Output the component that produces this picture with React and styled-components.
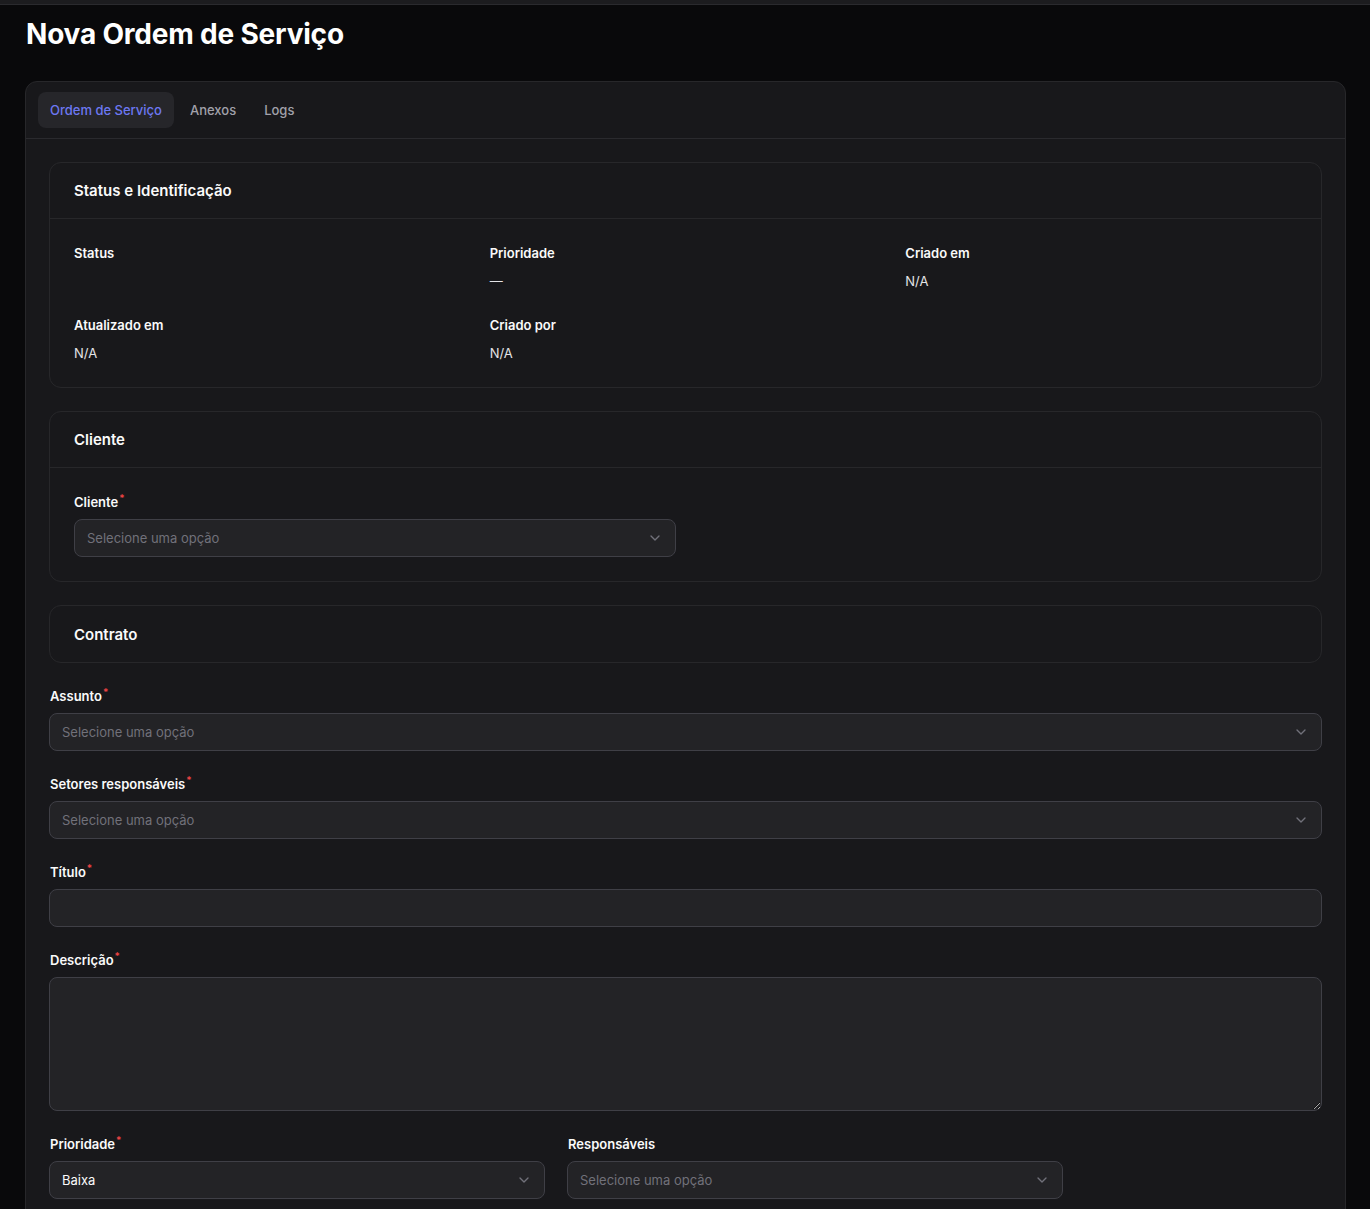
import styled, { createGlobalStyle } from 'styled-components'
import { ChevronDown } from 'lucide-react'

const GlobalStyle = createGlobalStyle`
  * { box-sizing: border-box; }
  body {
    margin: 0;
    background: #09090b;
    font-family: Inter, 'Noto Sans', sans-serif;
    color: #fafafa;
  }
`

const TopStrip = styled.div`
  height: 5px;
  background: #1c1c1f;
  border-bottom: 1px solid #2a2a2e;
`

const Page = styled.div`
  padding: 11px 24px 40px 25px;
`

const Title = styled.h1`
  margin: 0 0 29px 1px;
  font-size: 28px;
  line-height: 36px;
  font-weight: 700;
  letter-spacing: -0.2px;
  color: #fff;
`

const Card = styled.div`
  background: #18181b;
  border: 1px solid #27272a;
  border-radius: 12px;
`

const TabBar = styled.div`
  display: flex;
  gap: 4px;
  padding: 10px 12px;
  border-bottom: 1px solid #2a2a2e;
`

const Tab = styled.div`
  height: 36px;
  display: flex;
  align-items: center;
  padding: 0 12px;
  border-radius: 8px;
  font-size: 13px;
  font-weight: 500;
  color: ${(p) => (p.$active ? '#6d78f2' : '#a1a1aa')};
  background: ${(p) => (p.$active ? '#26262a' : 'transparent')};
`

const Content = styled.div`
  display: flex;
  flex-direction: column;
  gap: 23px;
  padding: 23px 23px 40px;
`

const Section = styled.section`
  border: 1px solid #27272a;
  border-radius: 12px;
`

const SectionHeader = styled.div`
  height: 56px;
  display: flex;
  align-items: center;
  padding: 0 24px;
  font-size: 15px;
  font-weight: 600;
  color: #fafafa;
  border-bottom: ${(p) => (p.$last ? 'none' : '1px solid #27272a')};
`

const SectionBody = styled.div`
  padding: 24px;
`

const InfoGrid = styled.div`
  display: grid;
  grid-template-columns: repeat(3, 1fr);
  column-gap: 24px;
  row-gap: 24px;
`

const InfoItem = styled.div`
  display: flex;
  flex-direction: column;
  gap: 8px;
`

const InfoLabel = styled.div`
  font-size: 13px;
  line-height: 20px;
  font-weight: 600;
  color: #fafafa;
`

const InfoValue = styled.div`
  font-size: 13px;
  line-height: 20px;
  min-height: 20px;
  color: #e4e4e7;
`

const Field = styled.div`
  display: flex;
  flex-direction: column;
  gap: 7px;
  width: ${(p) => p.$width || '100%'};
`

const Label = styled.label`
  font-size: 13px;
  line-height: 20px;
  font-weight: 600;
  color: #fafafa;
  padding-left: ${(p) => (p.$inset ? '0' : '1px')};
`

const Req = styled.span`
  color: #ef4444;
  font-size: 10px;
  vertical-align: super;
  line-height: 0;
  margin-left: 1px;
`

const SelectBox = styled.div`
  height: 38px;
  display: flex;
  align-items: center;
  justify-content: space-between;
  padding: 0 12px;
  background: #232326;
  border: 1px solid #3f3f46;
  border-radius: 8px;
  font-size: 13px;
  color: ${(p) => (p.$filled ? '#fafafa' : '#71717a')};
`

const TextInput = styled.input`
  height: 38px;
  width: 100%;
  padding: 0 12px;
  background: #232326;
  border: 1px solid #3f3f46;
  border-radius: 8px;
  font: inherit;
  font-size: 13px;
  color: #fafafa;
  outline: none;
`

const TextArea = styled.textarea`
  display: block;
  height: 134px;
  width: 100%;
  padding: 8px 12px;
  background: #232326;
  border: 1px solid #3f3f46;
  border-radius: 8px;
  font: inherit;
  font-size: 13px;
  color: #fafafa;
  outline: none;
`

const Row = styled.div`
  display: grid;
  grid-template-columns: 496px 496px;
  column-gap: 22px;
`

function Select({ value, placeholder = 'Selecione uma opção' }) {
  return (
    <SelectBox $filled={!!value}>
      <span>{value || placeholder}</span>
      <ChevronDown size={16} color='#71717a' />
    </SelectBox>
  )
}

const info = [
  { label: 'Status', value: '' },
  { label: 'Prioridade', value: '—' },
  { label: 'Criado em', value: 'N/A' },
  { label: 'Atualizado em', value: 'N/A' },
  { label: 'Criado por', value: 'N/A' },
]

export default function App() {
  return (
    <>
      <GlobalStyle />
      <TopStrip />
      <Page>
        <Title>Nova Ordem de Serviço</Title>
        <Card>
          <TabBar>
            <Tab $active>Ordem de Serviço</Tab>
            <Tab>Anexos</Tab>
            <Tab>Logs</Tab>
          </TabBar>
          <Content>
            <Section>
              <SectionHeader>Status e Identificação</SectionHeader>
              <SectionBody>
                <InfoGrid>
                  {info.map((i) => (
                    <InfoItem key={i.label}>
                      <InfoLabel>{i.label}</InfoLabel>
                      <InfoValue>{i.value}</InfoValue>
                    </InfoItem>
                  ))}
                </InfoGrid>
              </SectionBody>
            </Section>

            <Section>
              <SectionHeader>Cliente</SectionHeader>
              <SectionBody>
                <Field $width='602px'>
                  <Label $inset>Cliente<Req>*</Req></Label>
                  <Select />
                </Field>
              </SectionBody>
            </Section>

            <Section>
              <SectionHeader $last>Contrato</SectionHeader>
            </Section>

            <Field>
              <Label>Assunto<Req>*</Req></Label>
              <Select />
            </Field>
            <Field>
              <Label>Setores responsáveis<Req>*</Req></Label>
              <Select />
            </Field>
            <Field>
              <Label>Título<Req>*</Req></Label>
              <TextInput />
            </Field>
            <Field>
              <Label>Descrição<Req>*</Req></Label>
              <TextArea />
            </Field>
            <Row>
              <Field>
                <Label>Prioridade<Req>*</Req></Label>
                <Select value='Baixa' />
              </Field>
              <Field>
                <Label>Responsáveis</Label>
                <Select />
              </Field>
            </Row>
          </Content>
        </Card>
      </Page>
    </>
  )
}
